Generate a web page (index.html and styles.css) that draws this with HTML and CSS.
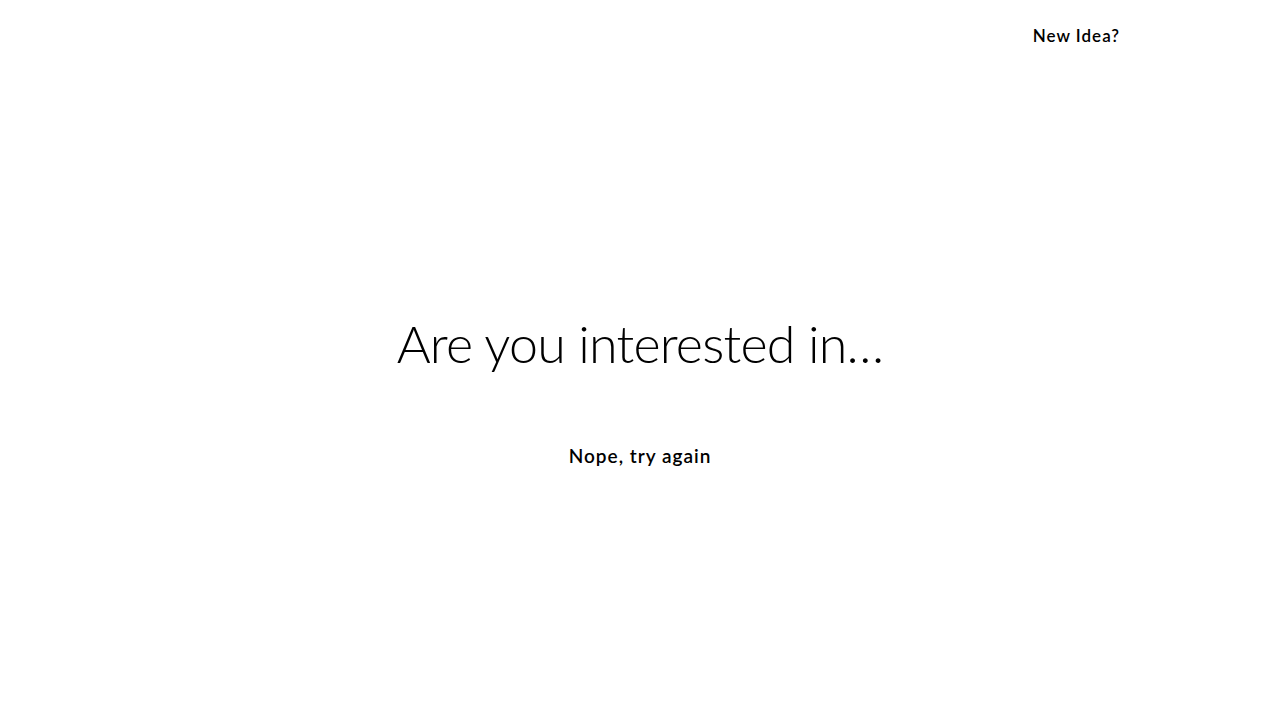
FILE: index.html
```html
<!DOCTYPE html>
<html lang="en">
<head>
<meta charset="utf-8">
<title>Idea</title>
<link rel="stylesheet" href="styles.css">
</head>
<body>
<header class="topbar">
  <button class="link-btn new-idea">New Idea?</button>
</header>
<main class="stage">
  <h1 class="question">Are you interested in…</h1>
  <button class="link-btn retry">Nope, try again</button>
</main>
</body>
</html>
```

FILE: styles.css
```css
html, body {
  margin: 0;
  padding: 0;
  background: #fff;
  color: #000;
  font-family: Lato, "Open Sans", sans-serif;
}
body {
  height: 720px;
  display: flex;
  flex-direction: column;
}
.topbar {
  display: flex;
  justify-content: flex-end;
  padding: 26px 160px 0 0;
  height: 45px;
  box-sizing: border-box;
}
.link-btn {
  background: none;
  border: none;
  padding: 0;
  font-family: inherit;
  color: #000;
  cursor: pointer;
}
.new-idea {
  font-size: 17px;
  font-weight: 600;
  line-height: 20px;
  letter-spacing: 1px;
}
.stage {
  flex: 1;
  display: flex;
  flex-direction: column;
  align-items: center;
  padding-top: 266px;
}
.question {
  margin: 0;
  font-size: 52px;
  font-weight: 300;
  line-height: 64px;
  letter-spacing: -0.8px;
}
.retry {
  margin-top: 69px;
  font-size: 19px;
  font-weight: 600;
  line-height: 24px;
  letter-spacing: 1px;
}
```
